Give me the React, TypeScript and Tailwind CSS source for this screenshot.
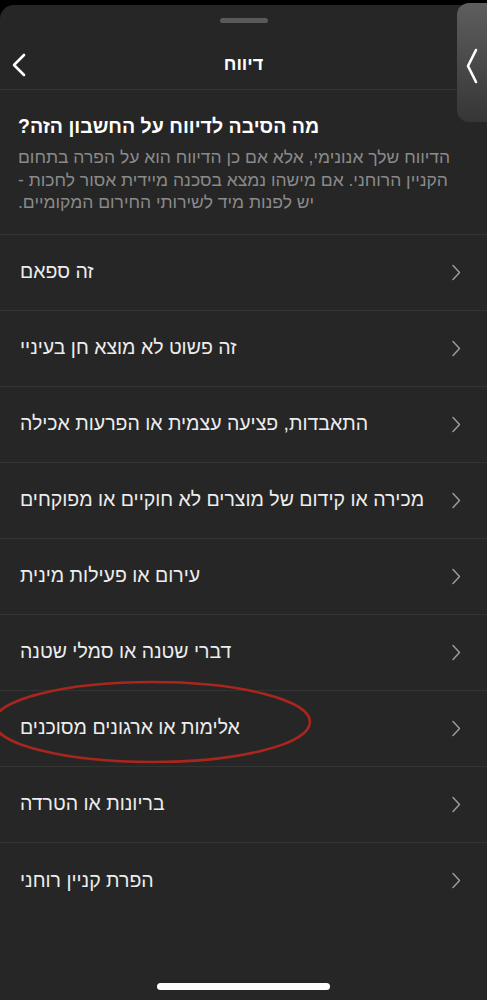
import React from 'react';

const reasons = [
  'זה ספאם',
  'זה פשוט לא מוצא חן בעיניי',
  'התאבדות, פציעה עצמית או הפרעות אכילה',
  'מכירה או קידום של מוצרים לא חוקיים או מפוקחים',
  'עירום או פעילות מינית',
  'דברי שטנה או סמלי שטנה',
  'אלימות או ארגונים מסוכנים',
  'בריונות או הטרדה',
  'הפרת קניין רוחני',
];

const RowChevron = () => (
  <svg width="11" height="17" viewBox="0 0 11 17" fill="none">
    <path d="M2 1.5 L8.5 8.5 L2 15.5" stroke="#9b9b9b" strokeWidth="1.5" strokeLinecap="round" strokeLinejoin="round" />
  </svg>
);

export default function App() {
  return (
    <div
      className="relative w-full h-[1000px] bg-black overflow-hidden"
      style={{ fontFamily: '"Liberation Sans", "DejaVu Sans", sans-serif' }}
    >
      <div className="mt-[5px] h-[995px] rounded-t-[14px] bg-[#262626] flex flex-col">
        {/* drag handle */}
        <div className="flex justify-center pt-[13px] pb-[15px]">
          <div className="w-[48px] h-[5px] rounded-full bg-[#5a5a5a]" />
        </div>

        {/* header */}
        <div className="relative h-[52px] flex items-center justify-center border-b border-[#333333]">
          <button className="absolute left-[10px] top-[14px]">
            <svg width="18" height="26" viewBox="0 0 18 26" fill="none">
              <path d="M14 3 L4 13 L14 23" stroke="#ffffff" strokeWidth="2.6" strokeLinecap="round" strokeLinejoin="round" />
            </svg>
          </button>
          <div dir="rtl" className="text-white text-[18px] font-bold leading-none">דיווח</div>
        </div>

        {/* intro */}
        <div dir="rtl" className="text-left px-[18px] pt-[23px] pb-[20px] border-b border-[#333333]">
          <div className="text-white text-[19.5px] font-bold leading-[26px]">מה הסיבה לדיווח על החשבון הזה?</div>
          <div className="mt-[7px] text-[#8a8a8a] text-[17.5px] leading-[22.5px]">
            הדיווח שלך אנונימי, אלא אם כן הדיווח הוא על הפרה בתחום
            <br />
            הקניין הרוחני. אם מישהו נמצא בסכנה מיידית אסור לחכות -
            <br />
            יש לפנות מיד לשירותי החירום המקומיים.
          </div>
        </div>

        {/* reasons */}
        <div className="flex flex-col">
          {reasons.map((r, i) => (
            <div
              key={r}
              className={`h-[76px] flex items-center pl-[20px] pr-[25px] ${i < reasons.length - 1 ? 'border-b border-[#333333]' : ''}`}
            >
              <div dir="rtl" className="flex-1 text-left text-[#ededed] text-[19.5px] leading-none">
                {r}
              </div>
              <RowChevron />
            </div>
          ))}
        </div>

        <div className="flex-1" />
        <div className="flex justify-center pb-[10px]">
          <div className="w-[173px] h-[7px] rounded-full bg-white" />
        </div>
      </div>

      {/* side tab overlay */}
      <div className="absolute top-[3px] right-0 w-[30px] h-[119px] rounded-l-[12px] bg-gradient-to-b from-[#5e5e5e] to-[#363636]">
        <svg className="absolute left-[8px] top-[44px]" width="14" height="38" viewBox="0 0 14 38" fill="none">
          <path d="M11 3 L3 19 L11 35" stroke="#ffffff" strokeWidth="2.6" strokeLinecap="round" strokeLinejoin="round" />
        </svg>
      </div>

      {/* red annotation ellipse */}
      <svg className="absolute left-0 top-[676px] pointer-events-none" width="330" height="95" viewBox="0 0 330 95" fill="none">
        <ellipse cx="152" cy="46" rx="158" ry="40" stroke="#a8261e" strokeWidth="2.5" />
      </svg>
    </div>
  );
}
